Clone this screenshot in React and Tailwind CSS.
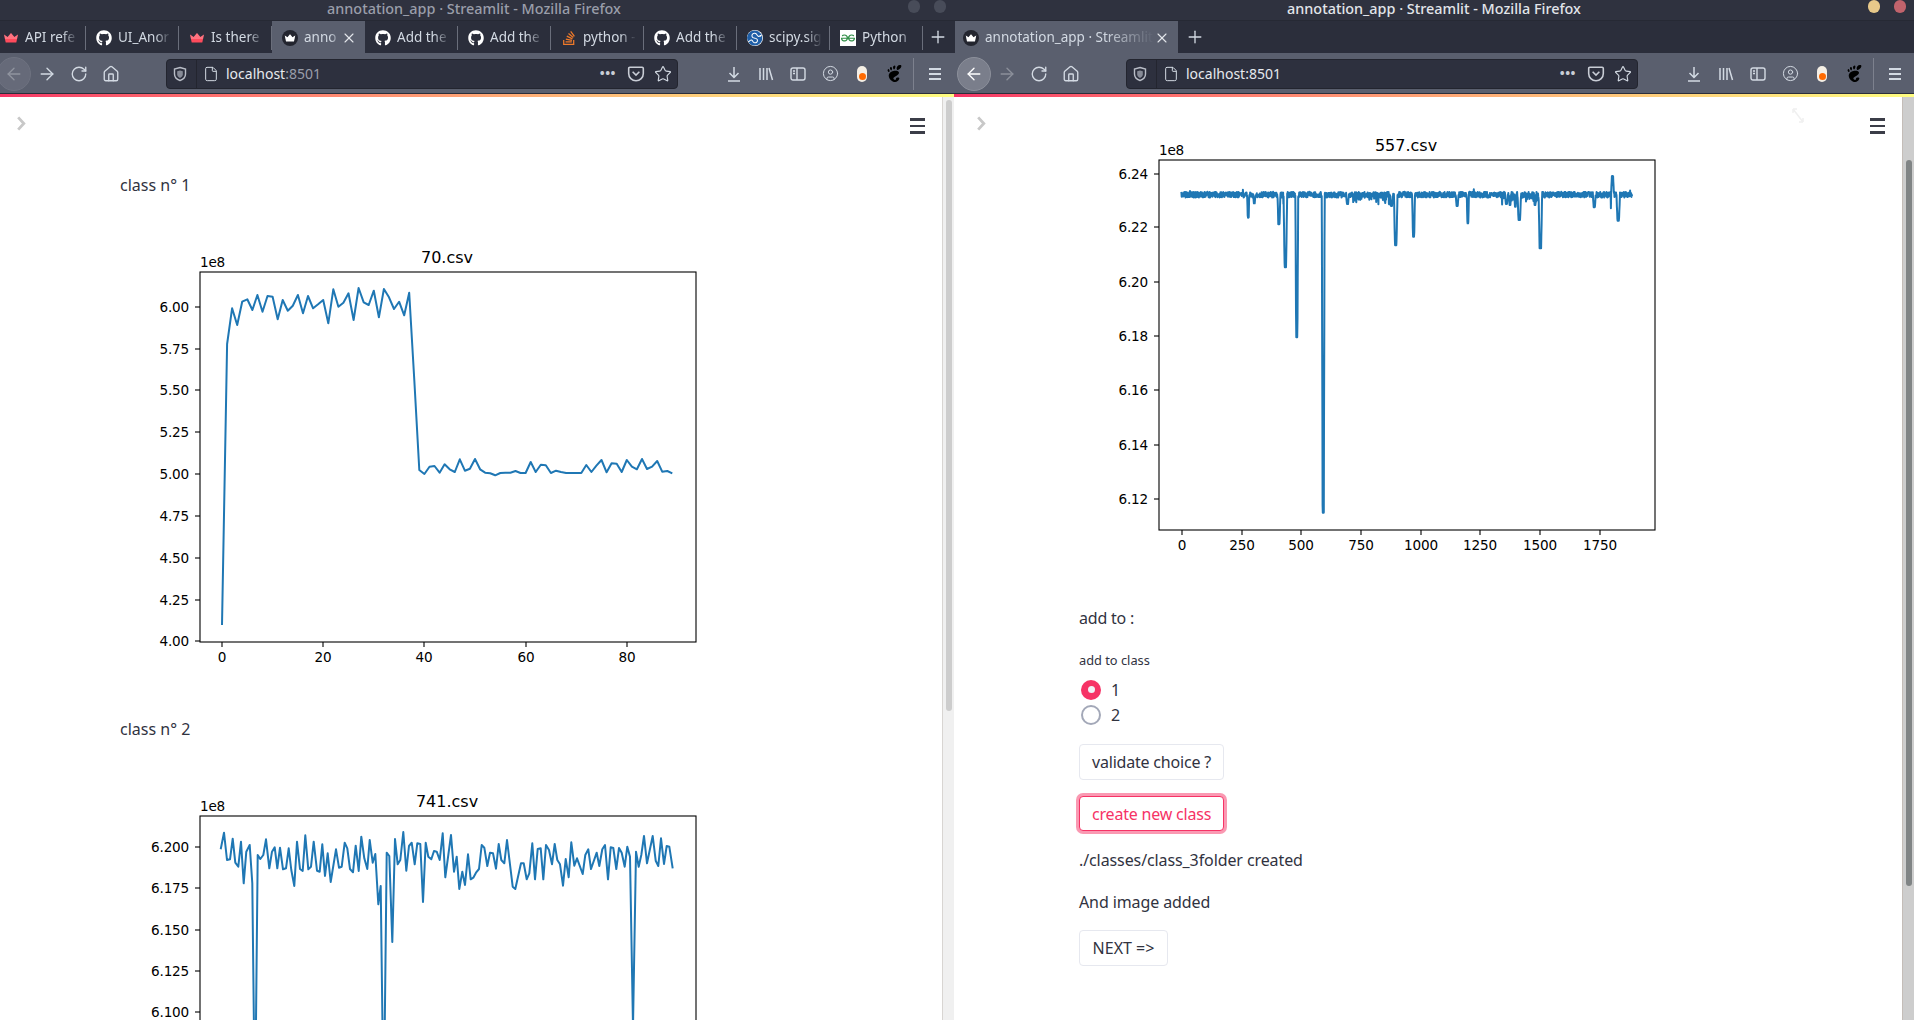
import { ArrowLeft, ArrowRight, RotateCw, House, File, X, Plus, Star, CircleUser } from 'lucide-react';
import { FaGithub, FaStackOverflow } from 'react-icons/fa';
import { SiScipy, SiGeeksforgeeks, SiGnome } from 'react-icons/si';

// chart data was read off the screenshot, in zoomed crop pixels
const series70 = [1155,312,205,255,185,178,210,165,215,168,170,238,180,212,197,165,220,168,205,193,180,250,148,200,188,160,240,144,187,195,152,232,147,172,207,185,226,158,420,690,702,680,678,698,673,688,696,658,692,686,657,688,698,700,706,699,698,698,693,699,699,666,696,674,676,699,692,696,699,699,699,699,675,696,677,660,697,670,671,696,660,680,688,657,687,680,663,695,693,700];
const points70 = series70.map((y, i) => [102 + i * 5.06, y / 3 + 26]);

const left741 = [[47,88],[57,38],[66,120],[75,118],[83,56],[91,128],[100,140],[108,65],[116,190],[124,95],[134,75],[142,190],[150,900],[158,105],[166,117],[175,105],[183,58],[193,145],[201,95],[209,82],[217,145],[225,83],[234,148],[243,145],[251,85],[259,150],[268,198],[276,65],[285,147],[293,153],[301,46],[310,148],[318,140],[326,65],[336,152],[344,155],[352,73],[360,168],[368,100],[377,186],[393,88],[402,143],[410,140],[419,68],[427,85],[435,147],[444,157],[452,77],[461,153],[469,50],[478,115],[487,147],[494,60],[503,128],[511,102],[520,253],[527,198],[536,900],[545,98],[553,108],[562,366],[570,57],[578,133],[586,120],[595,36],[604,152],[612,78],[620,68],[629,133],[637,70],[646,72],[654,246],[662,68],[670,110],[679,118],[687,93],[695,95],[704,120],[713,40]];
const right741 = [[1,172],[18,45],[27,155],[35,110],[43,207],[52,155],[60,195],[69,103],[77,178],[85,173],[93,158],[102,147],[110,75],[118,83],[127,138],[135,98],[144,100],[153,146],[161,72],[169,120],[178,130],[186,60],[203,200],[211,207],[228,130],[236,130],[245,178],[253,160],[262,70],[270,178],[278,87],[287,85],[295,178],[303,75],[312,90],[321,133],[329,72],[337,120],[345,133],[354,197],[362,117],[371,172],[379,67],[388,137],[396,115],[413,162],[421,105],[430,88],[438,147],[455,98],[463,138],[472,88],[480,75],[489,178],[497,82],[505,84],[514,147],[522,84],[530,98],[539,140],[547,80],[555,110],[564,620],[573,95],[581,140],[589,105],[597,48],[606,130],[623,48],[632,122],[640,138],[648,55],[657,132],[665,78],[673,80],[683,145]];
const points741 = [
  ...left741.map(([x, y]) => [x / 3 + 85, y / 3 + 62]),
  ...right741.map(([x, y]) => [x / 3 + 325, y / 3 + 62]),
];

const spikes557 = [[387,263,3],[404,220,3],[473,283,4],[488,315,3],[491,412,5],[523,622,4],[597,1148,4],[665,222,4],[788,228,4],[800,346,5],[850,320,4],[972,228,4],[1002,280,3],[1110,222,4],[1120,225,3],[1135,230,3],[1146,270,5],[1190,225,3],[1205,355,5],[1356,232,4],[1406,344,4],[1423,272,5],[1407,138,4]];
const makePoints557 = () => {
  let seed = 557;
  const rand = () => {
    seed = (seed * 16807) % 2147483647;
    return seed / 2147483647;
  };
  const points = [];
  for (let x = 200; x <= 1462; x += 0.67) {
    const busy = (x > 1095 && x < 1215) || (x > 680 && x < 800);
    let y = 194 + (rand() - 0.5) * 17;
    if (busy && rand() > 0.75) y += rand() * 22;
    if (rand() > 0.992) y -= 8;
    for (const [sx, sy, w] of spikes557) {
      const d = Math.abs(x - sx);
      if (d < w) y = 193 + (sy - 193) * Math.min(1, 1.7 * (1 - d / w));
    }
    points.push([x / 2.8 + 31, y / 3 + 28]);
  }
  return points;
};

const charts = {
  c70: {
    title: '70.csv',
    points: points70,
    yTicks: [['6.00',93],['5.75',135],['5.50',176],['5.25',218],['5.00',260],['4.75',302],['4.50',344],['4.25',386],['4.00',427]],
    xTicks: [['0',102],['20',203],['40',304],['60',406],['80',507]],
  },
  c741: {
    title: '741.csv',
    points: points741,
    yTicks: [['6.200',89],['6.175',130],['6.150',172],['6.125',213],['6.100',254]],
    xTicks: [],
  },
  c557: {
    title: '557.csv',
    points: makePoints557(),
    yTicks: [['6.24',72],['6.22',125],['6.20',180],['6.18',234],['6.16',288],['6.14',343],['6.12',397]],
    xTicks: [['0',103],['250',163],['500',222],['750',282],['1000',342],['1250',401],['1500',461],['1750',521]],
  },
};

const Chart = ({ title, points, yTicks, xTicks }) => (
  <svg width="640" height="480" viewBox="0 0 640 480" className="shrink-0 font-['DejaVu_Sans',sans-serif] text-[13.600px] tracking-[-0.2px]">
    <defs>
      <clipPath id={`axes-${title}`}>
        <rect x="80" y="58" width="496" height="370" />
      </clipPath>
    </defs>
    <text x="327" y="49" textAnchor="middle" className="text-[16px] tracking-normal">{title}</text>
    <text x="80" y="53">1e8</text>
    <polyline
      points={points.map(([x, y]) => `${x.toFixed(1)},${y.toFixed(1)}`).join(' ')}
      fill="none"
      stroke="#1f77b4"
      strokeWidth="2"
      strokeLinejoin="round"
      clipPath={`url(#axes-${title})`}
    />
    <rect x="80" y="58" width="496" height="370" fill="none" stroke="#000" strokeWidth="1.1" />
    {yTicks.map(([label, y]) => (
      <g key={label}>
        <line x1="75" x2="80" y1={y} y2={y} stroke="#000" strokeWidth="1.1" />
        <text x="69" y={y + 5} textAnchor="end">{label}</text>
      </g>
    ))}
    {xTicks.map(([label, x]) => (
      <g key={label}>
        <line x1={x} x2={x} y1="428" y2="433" stroke="#000" strokeWidth="1.1" />
        <text x={x} y="448" textAnchor="middle">{label}</text>
      </g>
    ))}
  </svg>
);

const Crown = ({ color = '#ff4b5c', className = 'w-4 h-4' }) => (
  <svg viewBox="0 0 16 16" className={className}>
    <path d="M1 4.5l3.6 2.6L8 3l3.4 4.1L15 4.5l-1.7 8H2.7z" fill={color} />
    <path d="M1 4.5l3.6 2.6L8 3l3.4 4.1L15 4.5 14 9H2z" fill="#fff" opacity="0.22" />
  </svg>
);

const ActiveFavicon = () => (
  <span className="flex h-4 w-4 shrink-0 items-center justify-center rounded-full bg-[#23252f]">
    <Crown color="#ffffff" className="h-3 w-3" />
  </span>
);

const Github = () => <FaGithub className="h-4 w-4 shrink-0 text-white" />;

const favicons = {
  crown: <Crown className="h-4 w-4 shrink-0" />,
  github: <Github />,
  stack: <FaStackOverflow className="h-4 w-4 shrink-0 text-[#ef7a2a]" />,
  scipy: <SiScipy className="h-4 w-4 shrink-0 rounded-full bg-white text-[#1f5fa8]" />,
  gfg: (
    <span className="flex h-4 w-4 shrink-0 items-center justify-center bg-white">
      <SiGeeksforgeeks className="h-3.5 w-3.5 text-[#2f8d46]" />
    </span>
  ),
  active: <ActiveFavicon />,
};

const Tab = ({ icon, label, active, wide, last }) => (
  <div
    className={`flex h-[32px] shrink-0 items-center pr-[8px] pt-[1px] ${wide ? 'w-[223px] pl-[8px]' : 'w-[93px] pl-[10px]'} ${active ? 'bg-[#5a5f6e]' : ''}`}
  >
    {favicons[icon]}
    <span className="ml-[6px] min-w-0 flex-1 overflow-hidden whitespace-nowrap text-[13.5px] text-[#d3dae3] [mask-image:linear-gradient(to_right,black_70%,transparent)]">
      {label}
    </span>
    {active && <X className="h-4 w-4 shrink-0 text-[#e4e7ec]" strokeWidth={1.6} />}
    {!active && !last && <span className="ml-[7px] mr-[-8px] h-[24px] w-px shrink-0 bg-[#6a6e7b]" />}
  </div>
);

const NavIcon = ({ children }) => (
  <div className="flex h-[32px] w-[32px] shrink-0 items-center justify-center text-[#d3dae3]">{children}</div>
);

const Library = () => (
  <svg viewBox="0 0 16 16" className="h-4 w-4" stroke="currentColor" strokeWidth="1.5" fill="none">
    <path d="M2 2v12M5.5 2v12M9 2v12M11 2l3.5 12" />
  </svg>
);

const SidebarIcon = () => (
  <svg viewBox="0 0 16 16" className="h-4 w-4" stroke="currentColor" strokeWidth="1.4" fill="none">
    <rect x="1" y="2" width="14" height="12" rx="2" />
    <path d="M7 2v12M3 5h2M3 7.5h2" />
  </svg>
);

const DownloadIcon = () => (
  <svg viewBox="0 0 16 16" className="h-4 w-4" stroke="currentColor" strokeWidth="1.5" fill="none">
    <path d="M8 1v10M3.5 7L8 11.5 12.500 7M2 15h12" />
  </svg>
);

const ShieldIcon = () => (
  <svg viewBox="0 0 16 16" className="h-4 w-4 shrink-0 text-[#b9bdc7]">
    <path d="M8 1.500l5.500 1.500v5c0 3.500-2.500 5.500-5.500 6.500-3-1-5.500-3-5.500-6.500V3z" fill="none" stroke="currentColor" strokeWidth="1.4" />
    <path d="M8 4.500l2.800.8v3c0 1.900-1.200 3-2.800 3.700-1.600-.7-2.800-1.800-2.800-3.700v-3z" fill="currentColor" opacity="0.65" />
  </svg>
);

const PocketIcon = () => (
  <svg viewBox="0 0 16 16" className="h-[18px] w-[18px] shrink-0 text-[#c9cdd6]" stroke="currentColor" strokeWidth="1.4" fill="none">
    <path d="M2.500 2h11a1 1 0 0 1 1 1v4.500a6.500 6.500 0 0 1-13 0V3a1 1 0 0 1 1-1z" />
    <path d="M5 6l3 3 3-3" />
  </svg>
);

const Toolbar = ({ dimPort, backActive }) => (
  <div className="flex h-[41px] shrink-0 items-center border-b border-[#2b2e3b] bg-[#5a5f6e] pt-[1px]">
    <div
      className={`ml-[3px] flex h-[34px] w-[34px] shrink-0 items-center justify-center rounded-full border ${backActive ? 'border-[#8c909b] bg-[#7a7e8b] text-white' : 'border-[#6e7280] bg-[#666a79] text-[#90949f]'}`}
    >
      <ArrowLeft className="h-5 w-5" strokeWidth={1.6} />
    </div>
    <NavIcon>
      <ArrowRight className={`h-5 w-5 ${backActive ? 'text-[#8c909b]' : ''}`} strokeWidth={1.6} />
    </NavIcon>
    <NavIcon><RotateCw className="h-[18px] w-[18px]" strokeWidth={1.8} /></NavIcon>
    <NavIcon><House className="h-[18px] w-[18px]" strokeWidth={1.8} /></NavIcon>
    <div className="ml-[39px] flex h-[30px] w-[512px] shrink-0 items-center rounded-[4px] border border-[#23252f] bg-[#2d303e] pl-[5px] pr-[5px]">
      <ShieldIcon />
      <span className="ml-[8px] h-[28px] w-px shrink-0 bg-[#23252f]" />
      <File className="ml-[6px] h-4 w-4 shrink-0 text-[#d3dae3]" strokeWidth={1.5} />
      <span className="ml-[7px] whitespace-nowrap text-[14px] text-[#e6e9ee]">
        localhost<span className={dimPort ? 'text-[#9a9eaa]' : ''}>:8501</span>
      </span>
      <span className="ml-auto text-[13px] font-bold leading-none tracking-[0.5px] text-[#c9cdd6]">•••</span>
      <span className="ml-[11px]"><PocketIcon /></span>
      <Star className="ml-[9px] h-[18px] w-[18px] shrink-0 text-[#d3dae3]" strokeWidth={1.5} />
    </div>
    <div className="ml-[40px] flex items-center">
      <NavIcon><DownloadIcon /></NavIcon>
      <NavIcon><Library /></NavIcon>
      <NavIcon><SidebarIcon /></NavIcon>
      <NavIcon><CircleUser className="h-[17px] w-[17px]" strokeWidth={1.4} /></NavIcon>
      <NavIcon>
        <span className="flex h-[16px] w-[10px] items-end justify-center rounded-full bg-[#f5efe5] pb-[2px]">
          <span className="h-[7px] w-[7px] rounded-full bg-[#ff6a00]" />
        </span>
      </NavIcon>
      <NavIcon><SiGnome className="h-[17px] w-[17px] text-black" /></NavIcon>
      <span className="ml-[3px] h-[32px] w-px bg-[#7d818e]" />
      <div className="ml-[5px] flex h-[32px] w-[32px] flex-col items-center justify-center gap-[3px]">
        <span className="h-[2px] w-[12px] bg-[#d3dae3]" />
        <span className="h-[2px] w-[12px] bg-[#d3dae3]" />
        <span className="h-[2px] w-[12px] bg-[#d3dae3]" />
      </div>
    </div>
  </div>
);

const Scrollbar = ({ track, thumb, edge, top, height }) => (
  <div className={`h-full w-[12px] shrink-0 border-l ${track} ${edge}`}>
    <div className={`mx-auto w-[6px] rounded-full ${thumb} ${top} ${height}`} />
  </div>
);

const PageOverlay = () => (
  <>
    <svg viewBox="0 0 10 16" className="absolute left-[22px] top-[19px] h-[15px] w-[10px] text-[#c8c8c8]" fill="none" stroke="currentColor" strokeWidth="3">
      <path d="M2 1.500L8 8l-6 6.500" />
    </svg>
    <div className="absolute left-[916px] top-[21px] flex w-[15px] flex-col gap-[4px]">
      <span className="h-[2.500px] bg-[#3b3d48]" />
      <span className="h-[2.500px] bg-[#3b3d48]" />
      <span className="h-[2.500px] bg-[#3b3d48]" />
    </div>
  </>
);

const Window = ({ title, focused, tabs, children, dimPort, scrollbar, wideTabs, overlay }) => (
  <div className="flex h-full w-[960px] shrink-0 flex-col overflow-hidden">
    <div className="relative flex h-[21px] shrink-0 items-center justify-center border-b border-[#262934] bg-[#2f323f]">
      <span className={`-mt-[3px] text-[14.400px] font-medium ${focused ? 'text-[#e2e5ea]' : 'text-[#9a9eaa]'}`}>{title}</span>
      <div className="absolute left-[914px] top-[0px] flex gap-[14px]">
        <span className={`h-[13px] w-[12px] rounded-full ${focused ? 'bg-[#e8c98a]' : 'bg-[#484c59]'}`} />
        <span className={`h-[13px] w-[12px] rounded-full ${focused ? 'bg-[#c1636c]' : 'bg-[#484c59]'}`} />
      </div>
    </div>
    <div className={`flex h-[32px] shrink-0 items-center bg-[#2b2e3b] ${wideTabs ? 'pl-[1px]' : '-ml-[1px]'}`}>
      {tabs.map((tab, i) => (
        <Tab key={i} {...tab} wide={wideTabs} />
      ))}
      <Plus className={`h-[20px] w-[20px] shrink-0 text-[#d3dae3] ${wideTabs ? 'ml-[7px]' : 'ml-[5px]'}`} strokeWidth={1.6} />
    </div>
    <Toolbar dimPort={dimPort} backActive={focused} />
    <div className="h-[3px] shrink-0 bg-gradient-to-r from-[#f63366] to-[#fffd80]" />
    <div className="relative flex min-h-0 flex-1 bg-white">
      <div className="min-w-0 flex-1 overflow-hidden">{children}</div>
      <Scrollbar {...scrollbar} />
      <PageOverlay />
      {overlay}
    </div>
  </div>
);

const Radio = ({ checked, label }) => (
  <div className="flex h-[25px] items-center">
    {checked ? (
      <span className="ml-[2px] flex h-[20px] w-[20px] items-center justify-center rounded-full bg-[#f63366]">
        <span className="h-[7px] w-[7px] rounded-full bg-[#f0f2f6]" />
      </span>
    ) : (
      <span className="ml-[2px] h-[20px] w-[20px] rounded-full border-2 border-[#a3a8b8] bg-white" />
    )}
    <span className="ml-[10px] text-[16px] text-[#31333f]">{label}</span>
  </div>
);

const Button = ({ children }) => (
  <button className="flex h-[36px] items-center rounded-[4px] border border-[#e6e8ef] bg-white px-[12px] text-[16px] tracking-[-0.2px] text-[#31333f]">
    {children}
  </button>
);

const leftTabs = [
  { icon: 'crown', label: 'API refe' },
  { icon: 'github', label: 'UI_Anor' },
  { icon: 'crown', label: 'Is there' },
  { icon: 'active', label: 'anno', active: true },
  { icon: 'github', label: 'Add the' },
  { icon: 'github', label: 'Add the' },
  { icon: 'stack', label: 'python -' },
  { icon: 'github', label: 'Add the' },
  { icon: 'scipy', label: 'scipy.sig' },
  { icon: 'gfg', label: 'Python' },
];

// the faint resize cursor left in the capture, top right of the second window
const CursorGhost = () => (
  <svg viewBox="0 0 12 15" className="absolute left-[838px] top-[11px] h-[15px] w-[12px] text-[#f0f0f0]" fill="none" stroke="currentColor" strokeWidth="1.5">
    <path d="M1 1l10 13M1 1v4M1 1h4M11 14v-4M11 14H7" />
  </svg>
);

const App = () => {
  return (
    <div className="flex h-screen w-screen overflow-hidden bg-white font-['Noto_Sans',sans-serif] text-[#31333f]">
      <div className="-ml-[6px] flex h-full">
        <Window
          title="annotation_app · Streamlit - Mozilla Firefox"
          tabs={leftTabs}
          dimPort
          scrollbar={{ track: 'bg-[#f0f0f0]', thumb: 'bg-[#cdcdcd]', edge: 'border-[#d8d5d2]', top: 'mt-[3px]', height: 'h-[611px]' }}
        >
          <div className="pl-[126px]">
            <p className="pt-[76px] text-[16px] leading-[24px]">class n° 1</p>
            <div className="mt-[17px]"><Chart {...charts.c70} /></div>
            <p className="mt-[23px] text-[16px] leading-[24px]">class n° 2</p>
            <div className="mt-[17px]"><Chart {...charts.c741} /></div>
          </div>
        </Window>
        <Window
          title="annotation_app · Streamlit - Mozilla Firefox"
          focused
          wideTabs
          tabs={[{ icon: 'active', label: 'annotation_app · Streamlit', active: true }]}
          scrollbar={{ track: 'bg-[#cdcdcd]', thumb: 'bg-[#808485]', edge: 'border-[#c4bdb8]', top: 'mt-[63px]', height: 'h-[726px]' }}
          overlay={<CursorGhost />}
        >
          <div className="pl-[125px] pt-[5px]">
            <Chart {...charts.c557} />
            <p className="mt-[24px] text-[16px] leading-[24px] tracking-[-0.2px]">add to :</p>
            <p className="mt-[21px] text-[12.800px] leading-[18px]">add to class</p>
            <div className="mt-[8px]">
              <Radio checked label="1" />
              <Radio label="2" />
            </div>
            <div className="mt-[17px]"><Button>validate choice ?</Button></div>
            <div className="mt-[16px]">
              <button className="flex h-[35px] items-center rounded-[4px] border border-[#f63366] bg-white px-[12px] text-[16px] tracking-[-0.2px] text-[#f63366] shadow-[0_0_0_3px_rgba(246,51,102,0.5)]">
                create new class
              </button>
            </div>
            <p className="mt-[17px] text-[16px] leading-[24px] tracking-[-0.1px]">./classes/class_3folder created</p>
            <p className="mt-[18px] text-[16px] leading-[24px] tracking-[-0.1px]">And image added</p>
            <div className="mt-[16px]">
              <button className="flex h-[36px] w-[89px] items-center justify-center rounded-[4px] border border-[#e6e8ef] bg-white text-[16px] text-[#31333f]">
                NEXT =&gt;
              </button>
            </div>
          </div>
        </Window>
      </div>
    </div>
  );
};

export default App;
